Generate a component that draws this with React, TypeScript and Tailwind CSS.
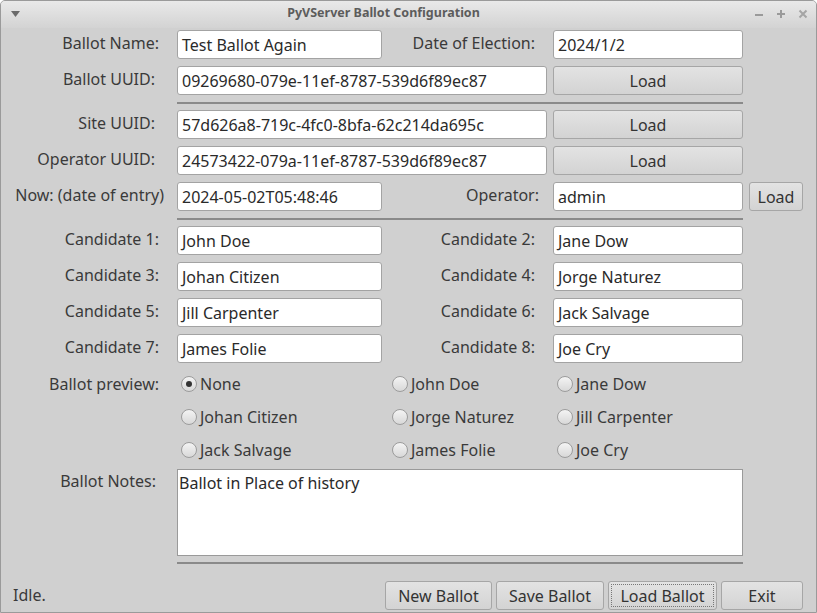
import React from "react";

const cols = "grid grid-cols-[170px_205px_159px_190px_54px] gap-x-[6px]";

function Label({ children, className = "" }: { children: React.ReactNode; className?: string }) {
  return (
    <div className={"h-[29px] flex items-center justify-end whitespace-nowrap text-[#3a3a3a] -translate-y-[2px] " + className}>
      {children}
    </div>
  );
}

function Input({ value, className = "" }: { value: string; className?: string }) {
  return (
    <div className={"h-[29px] bg-white border border-[#a3a3a3] rounded-[3px] flex items-center pl-[4px] text-[#2a2a2a] whitespace-nowrap overflow-hidden " + className}>
      {value}
    </div>
  );
}

function Btn({ children, className = "", focus = false }: { children: React.ReactNode; className?: string; focus?: boolean }) {
  return (
    <div className={"relative h-[29px] border border-[#a6a6a6] rounded-[3px] bg-gradient-to-b from-[#e3e3e3] to-[#d3d3d3] flex items-center justify-center text-[#333] " + className}>
      {focus && <div className="absolute inset-[2px] border border-dotted border-[#777]" />}
      <span className="relative">{children}</span>
    </div>
  );
}

function Sep() {
  return (
    <div className={cols}>
      <div />
      <div className="col-span-3 h-[2px] bg-[#8a8a8a]" />
    </div>
  );
}

function Radio({ label, checked = false }: { label: string; checked?: boolean }) {
  return (
    <div className="h-[29px] flex items-center pl-[4px] gap-[3px] text-[#3a3a3a] whitespace-nowrap -translate-y-[1px]">
      <div className="w-[16px] h-[16px] rounded-full border border-[#9c9c9c] bg-gradient-to-b from-[#f4f4f4] to-[#d8d8d8] flex items-center justify-center">
        {checked && <div className="w-[6px] h-[6px] rounded-full bg-[#333]" />}
      </div>
      <span>{label}</span>
    </div>
  );
}

export default function App() {
  return (
    <div className="w-[817px] h-[613px] bg-[#d0d0d0] border border-[#9a9a9a] rounded-t-[5px] flex flex-col overflow-hidden font-['Noto_Sans',sans-serif] text-[16px] leading-normal">
      {/* title bar */}
      <div className="h-[27px] shrink-0 bg-gradient-to-b from-[#e9e9e9] to-[#d3d3d3] relative flex items-center justify-center pr-[50px]">
        <svg className="absolute left-[10px] top-[10px]" width="9" height="6" viewBox="0 0 9 6">
          <path d="M0 0 L9 0 L4.5 6 Z" fill="#6a6a6a" />
        </svg>
        <span className="font-bold text-[12.5px] text-[#5c5c5c] -translate-y-[1px]">PyVServer Ballot Configuration</span>
        <svg className="absolute left-[753px] top-[9px]" width="10" height="10" viewBox="0 0 10 10">
          <rect x="1" y="4" width="8" height="2" fill="#9a9a9a" />
        </svg>
        <svg className="absolute left-[775px] top-[8px]" width="10" height="10" viewBox="0 0 10 10">
          <rect x="1" y="4" width="8" height="2" fill="#9a9a9a" />
          <rect x="4" y="1" width="2" height="8" fill="#9a9a9a" />
        </svg>
        <svg className="absolute left-[797px] top-[8px]" width="10" height="10" viewBox="0 0 10 10">
          <path d="M1.5 1.5 L8.5 8.5 M8.5 1.5 L1.5 8.5" stroke="#a5a5a5" strokeWidth="2" />
        </svg>
      </div>

      <div className="flex flex-col pt-[2px]">
        <div className={cols}>
          <Label className="pr-[12px]">Ballot Name:</Label>
          <Input value="Test Ballot Again" />
          <Label className="pr-[12px]">Date of Election:</Label>
          <Input value="2024/1/2" />
        </div>
        <div className={cols + " mt-[7px]"}>
          <Label className="pr-[16px]">Ballot UUID:</Label>
          <Input value="09269680-079e-11ef-8787-539d6f89ec87" className="col-span-2" />
          <Btn>Load</Btn>
        </div>
        <div className="mt-[7px] mb-[6px]"><Sep /></div>
        <div className={cols}>
          <Label className="pr-[16px]">Site UUID:</Label>
          <Input value="57d626a8-719c-4fc0-8bfa-62c214da695c" className="col-span-2" />
          <Btn>Load</Btn>
        </div>
        <div className={cols + " mt-[7px]"}>
          <Label className="pr-[16px]">Operator UUID:</Label>
          <Input value="24573422-079a-11ef-8787-539d6f89ec87" className="col-span-2" />
          <Btn>Load</Btn>
        </div>
        <div className={cols + " mt-[7px]"}>
          <Label className="pr-[7px]">Now: (date of entry)</Label>
          <Input value="2024-05-02T05:48:46" />
          <Label className="pr-[8px]">Operator:</Label>
          <Input value="admin" />
          <Btn>Load</Btn>
        </div>
        <div className="mt-[7px] mb-[6px]"><Sep /></div>
        {[
          ["Candidate 1:", "John Doe", "Candidate 2:", "Jane Dow"],
          ["Candidate 3:", "Johan Citizen", "Candidate 4:", "Jorge Naturez"],
          ["Candidate 5:", "Jill Carpenter", "Candidate 6:", "Jack Salvage"],
          ["Candidate 7:", "James Folie", "Candidate 8:", "Joe Cry"],
        ].map((r, i) => (
          <div key={i} className={cols + (i > 0 ? " mt-[7px]" : "")}>
            <Label className="pr-[12px]">{r[0]}</Label>
            <Input value={r[1]} />
            <Label className="pr-[12px]">{r[2]}</Label>
            <Input value={r[3]} />
          </div>
        ))}
        <div className={cols + " mt-[7px] gap-y-[4px]"}>
          <Label className="pr-[12px] translate-y-[-1px]">Ballot preview:</Label>
          <Radio label="None" checked />
          <Radio label="John Doe" />
          <Radio label="Jane Dow" />
          <div />
          <div />
          <Radio label="Johan Citizen" />
          <Radio label="Jorge Naturez" />
          <Radio label="Jill Carpenter" />
          <div />
          <div />
          <Radio label="Jack Salvage" />
          <Radio label="James Folie" />
          <Radio label="Joe Cry" />
          <div />
        </div>
        <div className={cols + " mt-[4px]"}>
          <div className="flex justify-end pr-[15px] pt-[0px] text-[#3a3a3a]">Ballot Notes:</div>
          <div className="col-span-3 h-[87px] bg-white border border-[#9a9a9a] pl-[1px] pt-[1px] text-[#2a2a2a]">
            Ballot in Place of history
          </div>
        </div>
        <div className="mt-[6px]"><Sep /></div>
      </div>

      <div className="flex-1 flex items-end justify-between pl-[12px] pr-[13px] pb-[2px]">
        <div className="text-[#3a3a3a] pb-[3px]">Idle.</div>
        <div className="flex gap-[4px]">
          <Btn className="w-[107px] h-[28px]">New Ballot</Btn>
          <Btn className="w-[108px] h-[28px]">Save Ballot</Btn>
          <Btn className="w-[109px] h-[28px]" focus>Load Ballot</Btn>
          <Btn className="w-[82px] h-[28px]">Exit</Btn>
        </div>
      </div>
    </div>
  );
}
